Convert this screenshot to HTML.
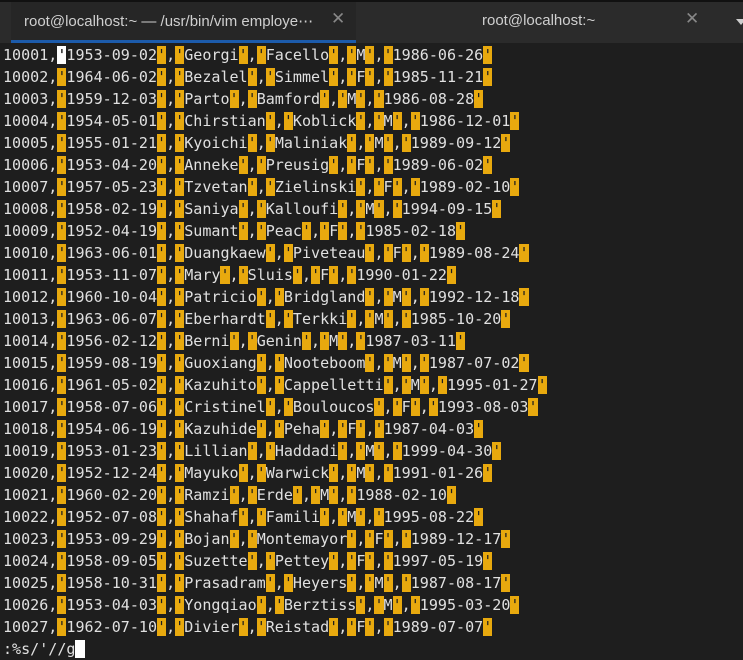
<!DOCTYPE html>
<html><head><style>
html,body{margin:0;padding:0;width:743px;height:659px;overflow:hidden;background:#1e1e1e}
.bar{position:absolute;left:0;top:0;width:743px;height:43px;background:#2b2b2b;border-top:2px solid #111;box-sizing:border-box}
.tab1{position:absolute;left:11px;top:2px;width:345px;height:38px;background:#262626;border-bottom:3px solid #1c5bab}
.t{position:absolute;font-family:"Liberation Sans",sans-serif;font-size:15px;color:#cfcfcf;top:12px}
.x{position:absolute;top:9px;color:#888;font-family:"DejaVu Sans",sans-serif;font-size:17px}
pre{position:absolute;left:3px;top:44px;margin:0;font-family:"DejaVu Sans Mono",monospace;font-size:15.05px;line-height:22px;color:#e0e0e0}
.h{background:#e8a90e;color:#1e1e1e}
.c{background:#fff;color:#000}
</style></head><body>
<div class="bar"></div>
<div class="tab1"></div>
<div class="t" style="left:24px">root@localhost:~ — /usr/bin/vim employe⋯</div>
<div class="x" style="left:331px">✕</div>
<div class="t" style="left:482px">root@localhost:~</div>
<div class="x" style="left:685px">✕</div>
<div style="position:absolute;left:736px;top:19px;border-left:5px solid transparent;border-right:5px solid transparent;border-top:6px solid #ccc"></div>
<pre>10001,<span class="c">'</span>1953-09-02<span class="h">'</span>,<span class="h">'</span>Georgi<span class="h">'</span>,<span class="h">'</span>Facello<span class="h">'</span>,<span class="h">'</span>M<span class="h">'</span>,<span class="h">'</span>1986-06-26<span class="h">'</span>
10002,<span class="h">'</span>1964-06-02<span class="h">'</span>,<span class="h">'</span>Bezalel<span class="h">'</span>,<span class="h">'</span>Simmel<span class="h">'</span>,<span class="h">'</span>F<span class="h">'</span>,<span class="h">'</span>1985-11-21<span class="h">'</span>
10003,<span class="h">'</span>1959-12-03<span class="h">'</span>,<span class="h">'</span>Parto<span class="h">'</span>,<span class="h">'</span>Bamford<span class="h">'</span>,<span class="h">'</span>M<span class="h">'</span>,<span class="h">'</span>1986-08-28<span class="h">'</span>
10004,<span class="h">'</span>1954-05-01<span class="h">'</span>,<span class="h">'</span>Chirstian<span class="h">'</span>,<span class="h">'</span>Koblick<span class="h">'</span>,<span class="h">'</span>M<span class="h">'</span>,<span class="h">'</span>1986-12-01<span class="h">'</span>
10005,<span class="h">'</span>1955-01-21<span class="h">'</span>,<span class="h">'</span>Kyoichi<span class="h">'</span>,<span class="h">'</span>Maliniak<span class="h">'</span>,<span class="h">'</span>M<span class="h">'</span>,<span class="h">'</span>1989-09-12<span class="h">'</span>
10006,<span class="h">'</span>1953-04-20<span class="h">'</span>,<span class="h">'</span>Anneke<span class="h">'</span>,<span class="h">'</span>Preusig<span class="h">'</span>,<span class="h">'</span>F<span class="h">'</span>,<span class="h">'</span>1989-06-02<span class="h">'</span>
10007,<span class="h">'</span>1957-05-23<span class="h">'</span>,<span class="h">'</span>Tzvetan<span class="h">'</span>,<span class="h">'</span>Zielinski<span class="h">'</span>,<span class="h">'</span>F<span class="h">'</span>,<span class="h">'</span>1989-02-10<span class="h">'</span>
10008,<span class="h">'</span>1958-02-19<span class="h">'</span>,<span class="h">'</span>Saniya<span class="h">'</span>,<span class="h">'</span>Kalloufi<span class="h">'</span>,<span class="h">'</span>M<span class="h">'</span>,<span class="h">'</span>1994-09-15<span class="h">'</span>
10009,<span class="h">'</span>1952-04-19<span class="h">'</span>,<span class="h">'</span>Sumant<span class="h">'</span>,<span class="h">'</span>Peac<span class="h">'</span>,<span class="h">'</span>F<span class="h">'</span>,<span class="h">'</span>1985-02-18<span class="h">'</span>
10010,<span class="h">'</span>1963-06-01<span class="h">'</span>,<span class="h">'</span>Duangkaew<span class="h">'</span>,<span class="h">'</span>Piveteau<span class="h">'</span>,<span class="h">'</span>F<span class="h">'</span>,<span class="h">'</span>1989-08-24<span class="h">'</span>
10011,<span class="h">'</span>1953-11-07<span class="h">'</span>,<span class="h">'</span>Mary<span class="h">'</span>,<span class="h">'</span>Sluis<span class="h">'</span>,<span class="h">'</span>F<span class="h">'</span>,<span class="h">'</span>1990-01-22<span class="h">'</span>
10012,<span class="h">'</span>1960-10-04<span class="h">'</span>,<span class="h">'</span>Patricio<span class="h">'</span>,<span class="h">'</span>Bridgland<span class="h">'</span>,<span class="h">'</span>M<span class="h">'</span>,<span class="h">'</span>1992-12-18<span class="h">'</span>
10013,<span class="h">'</span>1963-06-07<span class="h">'</span>,<span class="h">'</span>Eberhardt<span class="h">'</span>,<span class="h">'</span>Terkki<span class="h">'</span>,<span class="h">'</span>M<span class="h">'</span>,<span class="h">'</span>1985-10-20<span class="h">'</span>
10014,<span class="h">'</span>1956-02-12<span class="h">'</span>,<span class="h">'</span>Berni<span class="h">'</span>,<span class="h">'</span>Genin<span class="h">'</span>,<span class="h">'</span>M<span class="h">'</span>,<span class="h">'</span>1987-03-11<span class="h">'</span>
10015,<span class="h">'</span>1959-08-19<span class="h">'</span>,<span class="h">'</span>Guoxiang<span class="h">'</span>,<span class="h">'</span>Nooteboom<span class="h">'</span>,<span class="h">'</span>M<span class="h">'</span>,<span class="h">'</span>1987-07-02<span class="h">'</span>
10016,<span class="h">'</span>1961-05-02<span class="h">'</span>,<span class="h">'</span>Kazuhito<span class="h">'</span>,<span class="h">'</span>Cappelletti<span class="h">'</span>,<span class="h">'</span>M<span class="h">'</span>,<span class="h">'</span>1995-01-27<span class="h">'</span>
10017,<span class="h">'</span>1958-07-06<span class="h">'</span>,<span class="h">'</span>Cristinel<span class="h">'</span>,<span class="h">'</span>Bouloucos<span class="h">'</span>,<span class="h">'</span>F<span class="h">'</span>,<span class="h">'</span>1993-08-03<span class="h">'</span>
10018,<span class="h">'</span>1954-06-19<span class="h">'</span>,<span class="h">'</span>Kazuhide<span class="h">'</span>,<span class="h">'</span>Peha<span class="h">'</span>,<span class="h">'</span>F<span class="h">'</span>,<span class="h">'</span>1987-04-03<span class="h">'</span>
10019,<span class="h">'</span>1953-01-23<span class="h">'</span>,<span class="h">'</span>Lillian<span class="h">'</span>,<span class="h">'</span>Haddadi<span class="h">'</span>,<span class="h">'</span>M<span class="h">'</span>,<span class="h">'</span>1999-04-30<span class="h">'</span>
10020,<span class="h">'</span>1952-12-24<span class="h">'</span>,<span class="h">'</span>Mayuko<span class="h">'</span>,<span class="h">'</span>Warwick<span class="h">'</span>,<span class="h">'</span>M<span class="h">'</span>,<span class="h">'</span>1991-01-26<span class="h">'</span>
10021,<span class="h">'</span>1960-02-20<span class="h">'</span>,<span class="h">'</span>Ramzi<span class="h">'</span>,<span class="h">'</span>Erde<span class="h">'</span>,<span class="h">'</span>M<span class="h">'</span>,<span class="h">'</span>1988-02-10<span class="h">'</span>
10022,<span class="h">'</span>1952-07-08<span class="h">'</span>,<span class="h">'</span>Shahaf<span class="h">'</span>,<span class="h">'</span>Famili<span class="h">'</span>,<span class="h">'</span>M<span class="h">'</span>,<span class="h">'</span>1995-08-22<span class="h">'</span>
10023,<span class="h">'</span>1953-09-29<span class="h">'</span>,<span class="h">'</span>Bojan<span class="h">'</span>,<span class="h">'</span>Montemayor<span class="h">'</span>,<span class="h">'</span>F<span class="h">'</span>,<span class="h">'</span>1989-12-17<span class="h">'</span>
10024,<span class="h">'</span>1958-09-05<span class="h">'</span>,<span class="h">'</span>Suzette<span class="h">'</span>,<span class="h">'</span>Pettey<span class="h">'</span>,<span class="h">'</span>F<span class="h">'</span>,<span class="h">'</span>1997-05-19<span class="h">'</span>
10025,<span class="h">'</span>1958-10-31<span class="h">'</span>,<span class="h">'</span>Prasadram<span class="h">'</span>,<span class="h">'</span>Heyers<span class="h">'</span>,<span class="h">'</span>M<span class="h">'</span>,<span class="h">'</span>1987-08-17<span class="h">'</span>
10026,<span class="h">'</span>1953-04-03<span class="h">'</span>,<span class="h">'</span>Yongqiao<span class="h">'</span>,<span class="h">'</span>Berztiss<span class="h">'</span>,<span class="h">'</span>M<span class="h">'</span>,<span class="h">'</span>1995-03-20<span class="h">'</span>
10027,<span class="h">'</span>1962-07-10<span class="h">'</span>,<span class="h">'</span>Divier<span class="h">'</span>,<span class="h">'</span>Reistad<span class="h">'</span>,<span class="h">'</span>F<span class="h">'</span>,<span class="h">'</span>1989-07-07<span class="h">'</span>
:%s/'//g<span class="c"> </span></pre>
</body></html>
